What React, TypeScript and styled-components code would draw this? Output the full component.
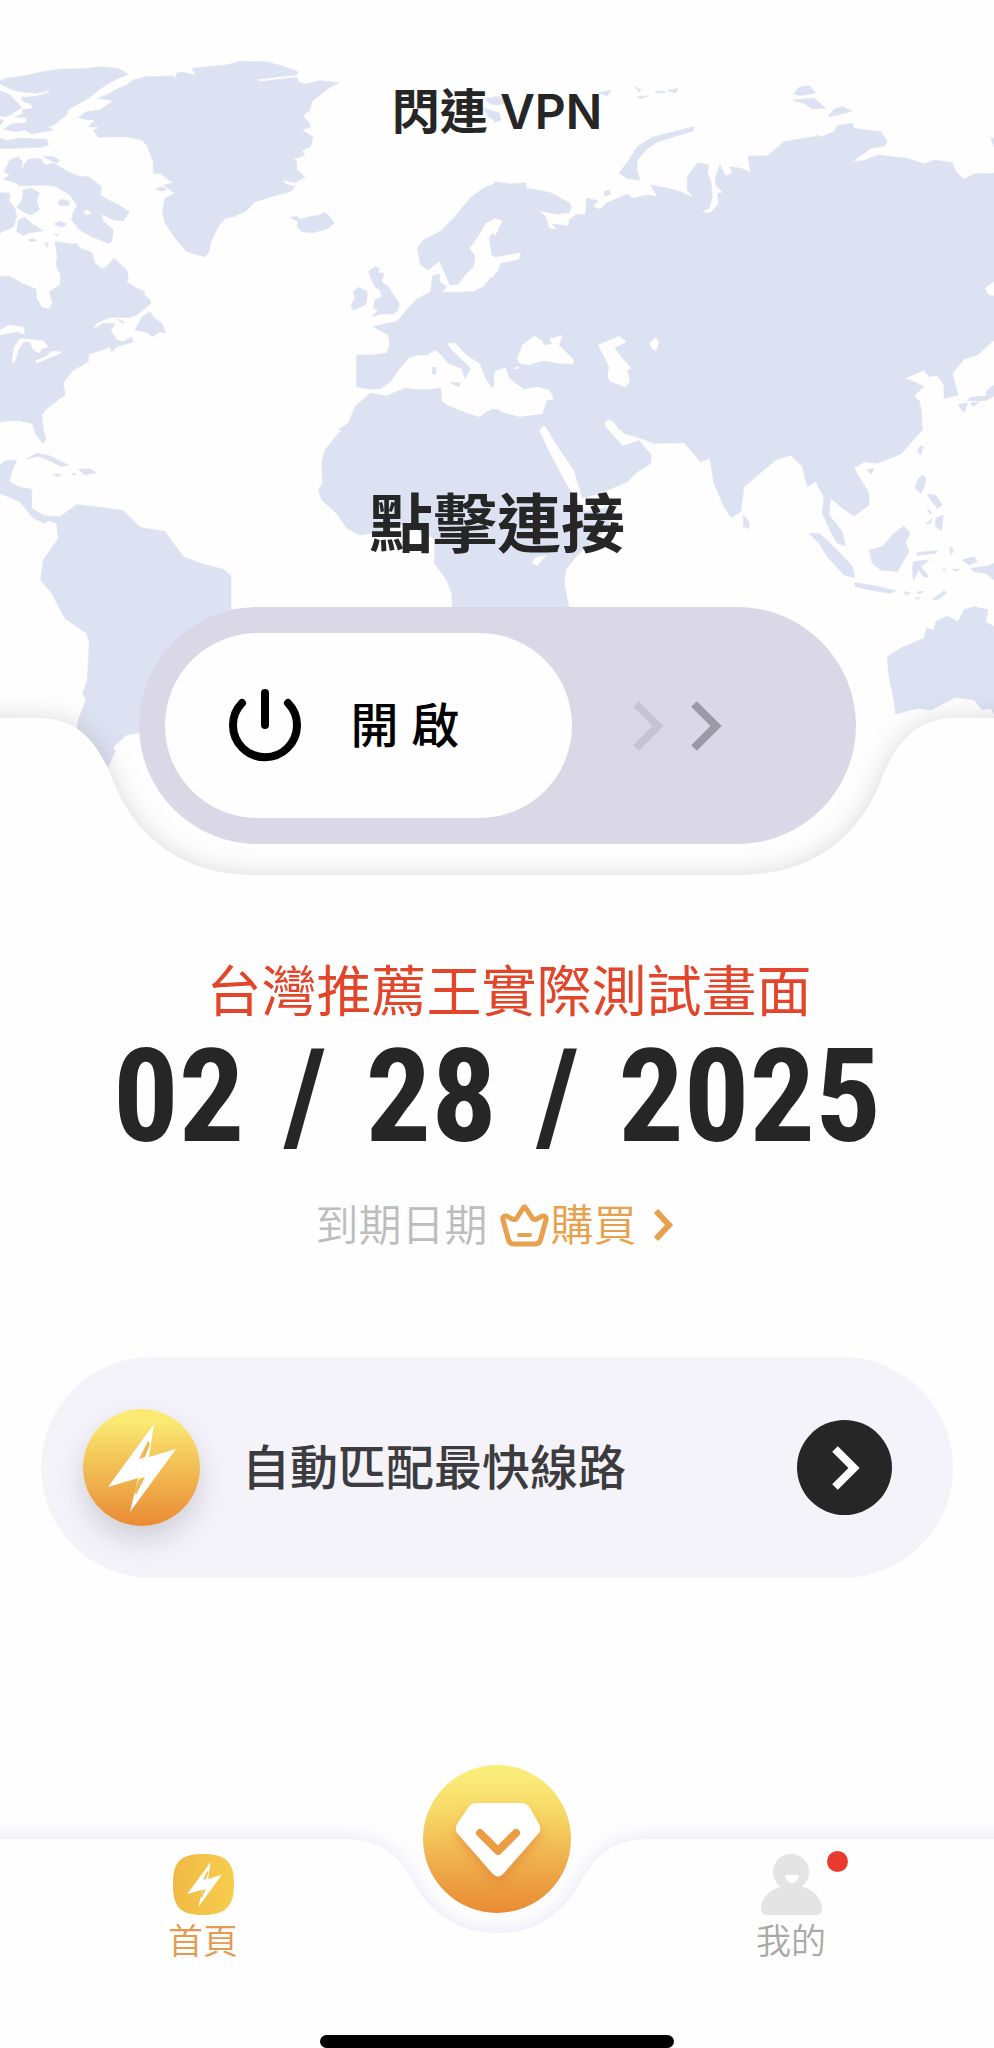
import React from "react";
import styled, { createGlobalStyle } from "styled-components";

const PAGE = "#fefefe";
const LAND = "#dde2f2";
const INK = "#262626";
const AMBER = "#e8a04c";

const GlobalStyle = createGlobalStyle`
  *, *::before, *::after { box-sizing: border-box; }
  body {
    margin: 0;
    background: ${PAGE};
    color: ${INK};
    font-family: Inter, "Noto Sans CJK TC", sans-serif;
  }
  h1, h2, p { margin: 0; }
  button { font: inherit; color: inherit; border: 0; cursor: pointer; }
  a { color: inherit; text-decoration: none; }
`;

const Page = styled.div`
  display: flex;
  flex-direction: column;
  min-height: 100vh;
  overflow: clip;
`;

/* ---------- hero ---------- */

const Hero = styled.header`
  position: relative;
  display: flex;
  flex-direction: column;
  align-items: center;
  padding: 80px 24px 31px;
`;

const MapDrawing = styled.svg`
  position: absolute;
  inset: 0;
  width: 100%;
  height: 100%;
`;

const SheetEdge = styled.svg`
  position: absolute;
  left: 0;
  bottom: 0;
  width: 100%;
  height: 157px;
  overflow: visible;
  filter: drop-shadow(0 0 13px rgba(0, 0, 0, 0.14));
`;

const HeroText = styled.div`
  position: relative;
  text-align: center;
`;

const AppTitle = styled.h1`
  font-size: 48px;
  line-height: 64px;
  font-weight: 600;
`;

const Status = styled.h2`
  margin-top: 340px;
  font-size: 64px;
  line-height: 80px;
  font-weight: 700;
`;

const Toggle = styled.button`
  position: relative;
  display: flex;
  align-items: center;
  gap: 60px;
  width: 100%;
  max-width: 717px;
  margin-top: 43px;
  padding: 26px;
  border-radius: 119px;
  background: #dad8e7;
`;

const Thumb = styled.span`
  display: flex;
  align-items: center;
  gap: 50px;
  width: 407px;
  height: 185px;
  padding-left: 64px;
  border-radius: 93px;
  background: ${PAGE};
  color: #000;
  font-size: 48px;
  line-height: 64px;
  font-weight: 500;
`;

const Arrows = styled.span`
  display: flex;
  gap: 26px;
`;

/* ---------- plan ---------- */

const Content = styled.main`
  position: relative;
  display: flex;
  flex-direction: column;
  background: ${PAGE};
`;

const Plan = styled.section`
  display: flex;
  flex-direction: column;
  align-items: center;
  padding: 80px 24px 0;
`;

const Note = styled.p`
  padding-left: 24px;
  color: #e3452a;
  font-size: 55px;
  line-height: 72px;
`;

const ExpiryDate = styled.time`
  display: flex;
  gap: 39px;
  font-family: "Roboto Condensed", Roboto, sans-serif;
  font-size: 130px;
  line-height: 140px;
  font-weight: 700;
`;

const ExpiryRow = styled.p`
  display: flex;
  align-items: center;
  gap: 12px;
  margin-top: 26px;
  color: #bdbdbd;
  font-size: 43px;
  line-height: 64px;
  font-weight: 350;
`;

const BuyLink = styled.a`
  display: flex;
  align-items: center;
  gap: 2px;
  color: ${AMBER};
`;

const BuyArrow = styled.svg`
  margin-left: 12px;
`;

/* ---------- route ---------- */

const Route = styled.button`
  display: flex;
  align-items: center;
  gap: 42px;
  margin: 100px 41px 0;
  padding: 0 61px 0 42px;
  height: 221px;
  border-radius: 111px;
  background: #f4f3fa;
  color: #3c3c3f;
  font-size: 48px;
  line-height: 64px;
  font-weight: 500;
  text-align: left;
`;

const RouteName = styled.span`
  flex: 1;
`;

const Disc = styled.span<{ $size: number; $fill: string; $shadow?: string }>`
  display: flex;
  flex: none;
  align-items: center;
  justify-content: center;
  width: ${(p) => p.$size}px;
  height: ${(p) => p.$size}px;
  border-radius: 50%;
  background: ${(p) => p.$fill};
  box-shadow: ${(p) => p.$shadow ?? "none"};
`;

/* ---------- tab bar ---------- */

const TabBar = styled.nav`
  position: relative;
  display: grid;
  grid-template-columns: repeat(3, 1fr);
  margin-top: auto;
  padding: 15px 56px 0;
`;

const TabEdge = styled.svg`
  position: absolute;
  left: 0;
  top: 0;
  width: 100%;
  height: 194px;
  overflow: visible;
  filter: drop-shadow(0 0 10px rgba(190, 190, 235, 0.4));
`;

const Tab = styled.a<{ $active?: boolean }>`
  position: relative;
  display: flex;
  flex-direction: column;
  align-items: center;
  color: ${(p) => (p.$active ? "#e59a50" : "#a9a9a9")};
  font-size: 35px;
  line-height: 48px;
  font-weight: 350;
`;

const TabIcon = styled.span`
  position: relative;
  display: flex;
  margin-bottom: 2px;
`;

const Badge = styled.span`
  position: absolute;
  top: -3px;
  left: 66px;
  width: 21px;
  height: 21px;
  border-radius: 50%;
  background: #e83b2e;
`;

const VipButton = styled.button`
  position: relative;
  justify-self: center;
  width: 148px;
  height: 148px;
  margin-top: -89px;
  padding: 0;
  border-radius: 50%;
  background: linear-gradient(#faec78 8%, #f7d866 32%, #eeae4c 66%, #ea8b34);
`;

const HomeIndicator = styled.div`
  position: relative;
  width: 354px;
  height: 13px;
  margin: 70px auto 0;
  border-radius: 7px;
  background: #000;
`;

/* ---------- world map ---------- */

type Tile = { x: number; y: number; h: number; land: string[]; sea: string[] };

const tiles: Tile[] = [
  {
    x: 0,
    y: 30,
    h: 1200,
    land: [
      "M0 152 20 145 70 138 130 125 185 117 260 116 300 110 355 116 385 132 345 150 310 170 265 205 205 238 200 255 160 285 145 292 160 300 95 312 75 300 45 305 12 298 35 282 80 278 78 262 45 262 70 250 65 240 100 235 92 222 70 215 65 202 105 200 145 188 150 180 110 190 70 186 40 180 0 162Z",
      "M0 182 30 195 65 232 40 248 20 260 0 258Z",
      "M0 268 10 270 5 282 0 283Z",
      "M0 325 20 332 60 325 140 328 146 345 120 352 0 356Z",
      "M30 390 55 380 68 395 62 425 75 400 85 388 120 385 135 405 160 400 205 425 240 440 265 440 305 470 300 495 325 510 355 525 388 545 370 572 340 570 305 552 308 572 340 600 335 635 325 640 280 622 240 600 215 570 220 545 232 528 210 495 165 468 130 465 60 467 40 455 10 448 30 435 12 425Z",
      "M130 380 160 380 180 392 170 400Z",
      "M70 480 95 475 118 490 110 510 118 540 90 555 62 540 50 530 65 515Z",
      "M0 488 30 490 28 515 45 535 50 560 40 590 0 608Z",
      "M55 570 75 562 95 580 128 602 90 608 70 616 50 605Z",
      "M172 518 185 508 208 514 205 526 182 527ZM162 582 180 574 200 582 185 592ZM85 630 100 625 110 632 92 635ZM162 613 176 611 172 618ZM134 640 144 640 142 652Z",
      "M0 738 30 740 70 762 108 778 110 805 125 832 145 838 158 820 148 785 180 765 182 735 168 705 172 680 165 635 215 642 230 640 240 655 275 668 285 700 305 716 320 710 342 685 380 720 385 745 380 755 410 775 435 785 430 792 450 810 452 820 435 835 410 855 390 862 330 862 290 880 275 900 310 880 345 882 332 900 350 930 370 935 395 922 400 935 350 950 335 967 330 950 300 962 265 972 265 995 220 1020 195 1050 190 1060 195 1095 150 1125 125 1155 130 1200 105 1200 98 1180 60 1170 0 1172Z",
      "M355 868 372 875 368 882Z",
      "M450 845 462 865 485 880 497 908 480 905 455 920 445 908 405 900 425 862Z",
      "M235 262 260 245 300 240 340 212 295 205 330 190 345 180 380 165 400 150 440 140 520 138 525 150 530 130 545 126 590 137 575 115 610 112 680 105 720 94 800 96 840 106 895 125 890 135 830 141 770 148 780 155 890 142 895 155 915 162 960 152 1018 158 990 172 960 195 935 215 930 240 908 258 925 275 932 290 905 300 940 322 930 350 905 362 915 375 880 388 890 395 890 420 915 442 885 458 850 450 855 462 885 470 870 485 830 495 790 508 765 515 735 545 700 560 675 565 655 590 635 630 625 670 612 680 560 665 530 630 495 580 487 545 495 505 525 490 490 465 520 460 480 430 460 430 460 395 440 345 425 330 380 320 330 320 295 322 280 300 303 292 265 290 285 270 255 268Z",
      "M468 476 485 470 500 478 485 484Z",
      "M870 562 890 560 900 568 930 560 960 555 970 547 985 555 1003 578 985 595 940 608 905 605 890 588 895 575Z",
      "M1075 772 1102 785 1100 815 1095 825 1060 840 1053 825 1065 805 1060 785Z",
      "M1105 725 1125 710 1138 715 1135 728 1153 730 1145 755 1165 770 1180 795 1198 820 1195 840 1180 852 1145 852 1115 860 1135 840 1120 835 1125 810 1145 800 1140 780 1125 770 1115 750Z",
      "M1500 455 1450 475 1410 505 1365 560 1320 605 1270 630 1252 655 1262 705 1285 720 1318 692 1335 730 1350 765 1375 762 1395 735 1420 710 1425 680 1408 655 1440 610 1455 580 1480 568 1500 568Z",
      "M1500 595 1468 620 1475 675 1500 682Z",
      "M1500 735 1470 745 1450 770 1420 785 1325 788 1340 770 1320 758 1318 732 1298 738 1292 785 1250 808 1220 840 1190 875 1160 880 1120 890 1165 915 1170 945 1160 970 1110 975 1070 975 1070 1070 1110 1078 1145 1075 1175 1050 1195 1020 1225 985 1250 975 1280 975 1305 960 1325 975 1345 1000 1385 1015 1395 1045 1412 1015 1380 985 1350 955 1340 938 1365 938 1400 975 1440 1000 1455 1040 1475 1072 1500 1060Z",
      "M1297 1012 1308 1012 1307 1032 1297 1032ZM1350 1058 1382 1058 1376 1070Z",
      "M1015 1200 1045 1180 1065 1130 1110 1090 1160 1098 1215 1075 1270 1080 1322 1075 1325 1120 1350 1130 1400 1150 1440 1165 1460 1145 1500 1140V1200Z",
      "M1455 205 1500 200V225L1470 222ZM1450 235 1500 250V275L1470 265Z",
    ],
    sea: [
      "M0 900 25 885 70 890 75 915 50 905 20 912 0 915Z",
      "M60 925 95 928 130 932 145 950 125 958 118 970 100 960 88 935 72 935 58 955 45 995 35 998 42 950Z",
      "M105 992 140 978 155 963 187 965 175 974 145 985 110 1000Z",
      "M248 545 262 540 276 548 262 556Z",
      "M1500 1018 1490 1022 1500 1040Z",
    ],
  },
  {
    x: 494,
    y: 30,
    h: 1200,
    land: [
      "M0 455 50 462 95 458 95 475 120 478 170 488 225 518 232 530 225 548 190 552 135 542 155 560 165 595 190 600 175 582 225 588 225 570 245 555 275 553 278 505 312 512 295 530 318 538 340 518 365 508 400 492 415 505 460 495 490 500 470 465 520 475 560 485 600 505 580 480 580 440 610 398 645 405 640 430 650 450 655 500 645 535 620 548 650 548 675 520 670 490 688 488 665 465 665 440 678 405 695 438 715 430 708 410 740 415 770 428 762 378 820 378 870 335 960 320 970 315 980 322 1020 305 1030 287 1075 280 1080 295 1100 298 1160 305 1180 335 1170 348 1130 355 1075 395 1110 392 1150 375 1240 385 1290 402 1320 390 1375 398 1385 425 1410 448 1440 432 1500 430V930L1450 975 1410 988 1375 1030 1392 1095 1350 1105 1350 1065 1330 1035 1305 1040 1290 1020 1232 1045 1270 1060 1290 1070 1262 1095 1280 1130 1285 1200H0Z",
      "M0 200 25 205 35 220 0 222ZM0 245 22 268 0 278Z",
      "M315 188 352 180 340 197ZM422 170 442 180 435 186ZM430 200 465 197 440 206ZM484 184 512 183 512 188 486 188ZM520 182 552 175 545 188Z",
      "M375 430 405 390 430 350 475 322 540 305 600 290 598 302 540 320 490 335 455 360 430 390 428 420 438 450 400 445Z",
      "M900 192 915 172 945 167 965 188 920 197ZM898 210 960 205 995 235 955 237 930 220ZM1002 260 1020 238 1045 230 1075 243 1030 255Z",
      "M330 485 345 480 350 492 334 498ZM1490 322 1500 326V352Z",
      "M1500 1065 1480 1080 1475 1098 1430 1102 1420 1112 1475 1112 1500 1098ZM1393 1125 1420 1120 1410 1147ZM1432 1120 1455 1116 1436 1128Z",
    ],
    sea: [
      "M0 1030 5 1022 35 1012 45 1045 90 1078 130 1070 165 1080 178 1102 155 1150 80 1162 0 1140Z",
      "M70 985 85 945 120 918 145 932 150 945 175 942 165 928 205 915 195 945 240 990 238 1003 190 1000 150 992 100 1005 75 1000Z",
      "M60 1014 70 1010 78 1014 68 1018Z",
      "M312 945 375 918 398 935 362 955 385 985 412 1015 400 1020 408 1055 395 1072 350 1055 340 1040 345 1010 325 970Z",
      "M466 940 485 922 495 938 487 962 475 958Z",
      "M0 565 25 572 5 615 0 615Z",
      "M0 682 80 668 75 688 20 700 10 725 0 735Z",
      "M1500 755 1472 775 1485 795 1500 797Z",
      "M150 1187 165 1200H135ZM330 1175 345 1166 358 1175 375 1200H335Z",
    ],
  },
  {
    x: 0,
    y: 400,
    h: 1425,
    land: [
      "M0 0H175L140 25 120 50 125 80 138 115 130 130 108 105 98 70 50 60 0 65Z",
      "M0 195 20 180 50 182 35 215 28 245 60 262 95 268 95 325 135 348 180 350 230 314 300 322 370 332 420 382 495 395 550 470 600 490 670 508 693 528V650L480 1000 415 998 380 1005 340 1040 345 1055 325 1100 230 990 235 960 258 900 248 880 262 840 268 730 260 700 195 655 155 580 122 540 130 480 175 415 170 370 145 362 135 370 100 355 60 305 0 280Z",
      "M80 178 110 160 150 168 205 195 185 200 150 182 115 168ZM235 207 270 207 288 218 255 225ZM160 222 185 223 172 230ZM216 220 228 222 222 226Z",
      "M1500 30 1475 28 1440 52 1380 38 1325 5V0H1090L1065 25 1045 75 1015 100 975 150 965 190 968 250 955 270 965 300 1010 340 1040 385 1080 405 1150 395 1230 365 1265 400 1305 415 1304 490 1340 540 1355 580 1360 640H1500Z",
    ],
    sea: [],
  },
  {
    x: 494,
    y: 400,
    h: 1425,
    land: [
      "M0 30 70 52 140 45 135 90 165 155 215 250 240 290 275 335 370 315 340 385 250 465 215 510 210 550 228 640H0Z",
      "M160 0 145 45 155 78 185 130 240 210 265 295 330 275 400 245 430 215 470 190 472 165 435 122 385 138 330 75 335 60 355 60 390 100 440 115 480 130 570 128 620 185 648 175 660 250 690 320 712 352 740 335 750 260 845 180 890 165 925 200 940 260 965 245 990 290 985 340 1010 395 1030 430 1055 438 1045 395 1005 345 1010 295 1040 320 1080 348 1125 315 1125 280 1080 205 1110 185 1150 190 1220 162 1285 90 1280 30 1275 0Z",
      "M1118 210 1140 205 1132 222ZM1270 150 1282 137 1288 142 1280 165ZM748 345 765 365 765 385 748 380Z",
      "M945 400 975 400 1030 450 1075 500 1082 533 1050 525 1000 470 975 430Z",
      "M1080 548 1130 555 1205 572 1190 580 1130 570 1085 560Z",
      "M1125 450 1165 440 1200 400 1230 378 1248 400 1235 425 1245 455 1210 515 1160 510 1135 490Z",
      "M1258 485 1305 480 1280 500 1305 530 1290 532 1275 510 1258 540 1255 510ZM1268 458 1330 452 1325 460 1270 466ZM1368 440 1380 450 1370 466Z",
      "M1275 235 1285 225 1296 235 1290 265 1280 280 1262 262ZM1300 282 1325 285 1345 315 1330 325 1310 300ZM1325 355 1348 345 1342 392 1325 378ZM1295 372 1315 356 1310 370ZM1298 325 1315 338 1308 342Z",
      "M1405 480 1440 470 1450 485 1425 495ZM1430 505 1480 498 1500 490V540L1475 520 1440 515ZM1375 508 1398 507 1385 514ZM1345 508 1356 508 1350 513Z",
      "M1230 575 1250 578 1235 586ZM1268 576 1290 574 1275 582ZM1315 598 1350 572 1358 578 1330 600ZM1262 592 1278 594 1270 598Z",
      "M1393 15 1420 10 1410 37ZM1430 10 1455 6 1436 18Z",
      "M1180 770 1225 742 1290 715 1298 685 1320 690 1325 665 1360 648 1392 665 1410 630 1440 620 1482 630 1475 665 1500 680V942L1490 925 1465 930 1440 900 1385 892 1310 930 1270 925 1205 942 1200 900 1185 830Z",
    ],
    sea: ["M113 490 125 472 158 465 130 497Z"],
  },
];

function WorldMap() {
  return (
    <MapDrawing viewBox="0 0 994 875" preserveAspectRatio="xMidYMin slice" aria-hidden="true">
      {tiles.map((t) => (
        <svg
          key={`${t.x}-${t.y}`}
          x={t.x}
          y={t.y}
          width={500}
          height={t.h / 3}
          viewBox={`0 0 1500 ${t.h}`}
        >
          <path d={t.land.join("")} fill={LAND} stroke={LAND} strokeWidth="2" strokeLinejoin="round" />
          <path d={t.sea.join("")} fill={PAGE} />
        </svg>
      ))}
    </MapDrawing>
  );
}

/* ---------- icons ---------- */

function PowerIcon() {
  return (
    <svg width="72" height="74" viewBox="0 0 72 74" fill="none" stroke="#000" strokeWidth="8" strokeLinecap="round" aria-hidden="true">
      <path d="M36 4V36M13 14A32 32 0 1 0 59 14" />
    </svg>
  );
}

function SlideArrow({ color }: { color: string }) {
  return (
    <svg width="32" height="52" viewBox="0 0 32 52" fill="none" stroke={color} strokeWidth="8" aria-hidden="true">
      <path d="M4 4 26 26 4 48" />
    </svg>
  );
}

function CrownIcon() {
  return (
    <svg width="49" height="43" viewBox="0 0 49 43" fill="none" stroke={AMBER} strokeWidth="5" strokeLinecap="round" strokeLinejoin="round" aria-hidden="true">
      <path d="M24 3C21 7 19 11 16 15C12 17 9 12 6 12Q2 12 3 16L8 34Q9 40 14 40H35Q40 40 41 34L46 16Q47 12 43 12C40 12 37 17 33 15C30 11 28 7 25 3Z" />
      <path d="M19 31H30" strokeWidth="4" />
    </svg>
  );
}

function BoltShape({ hollow }: { hollow: string }) {
  return (
    <>
      <path d="M56 0 10 63 40 54 32 88 78 25 51 33Z" fill="#fff" />
      <path d="M50 17 52 20 47 33 41 35ZM38 71 36 68 41 55 47 53Z" fill={hollow} />
    </>
  );
}

function BoltIcon() {
  return (
    <svg width="88" height="88" viewBox="0 0 88 88" aria-hidden="true">
      <BoltShape hollow="#f0b852" />
    </svg>
  );
}

function HomeIcon() {
  return (
    <svg width="61" height="61" viewBox="0 0 61 61" aria-hidden="true">
      <defs>
        <linearGradient id="home-fill">
          <stop offset="0" stopColor="#f1b944" />
          <stop offset="1" stopColor="#f6cd4e" />
        </linearGradient>
      </defs>
      <path d="M30 0C53 0 61 8 61 30S53 61 30 61 0 53 0 30 8 0 30 0Z" fill="url(#home-fill)" />
      <svg x="9" y="8" width="45" height="45" viewBox="0 0 88 88">
        <BoltShape hollow="#f3c149" />
      </svg>
    </svg>
  );
}

function ProfileIcon() {
  return (
    <svg width="61" height="61" viewBox="0 0 61 61" fill="#e4e4e4" aria-hidden="true">
      <circle cx="30" cy="18" r="18" />
      <path d="M16 34C22 30 38 30 45 34C55 38 61 46 61 55Q61 61 55 61H6Q0 61 0 55C0 46 6 38 16 34Z" />
      <path d="M25 21H37Q38 21 38 23Q35 29 31 29Q27 29 24 23Q24 21 25 21Z" fill={PAGE} />
    </svg>
  );
}

function GemIcon() {
  return (
    <svg width="148" height="148" viewBox="0 0 148 148" aria-hidden="true">
      <defs>
        <filter id="gem-shadow" x="-20%" y="-20%" width="140%" height="150%">
          <feDropShadow dx="0" dy="6" stdDeviation="5" floodColor="#e0782a" floodOpacity="0.5" />
        </filter>
      </defs>
      <path
        d="M54 38H98Q104 38 107 43L116 59Q119 65 115 69L81 108Q75 115 69 108L35 69Q31 65 34 59L45 43Q48 38 54 38Z"
        fill="#fff"
        filter="url(#gem-shadow)"
      />
      <path d="M57 68 75 86 93 68" fill="none" stroke="#ec9c41" strokeWidth="8" strokeLinecap="round" strokeLinejoin="round" />
    </svg>
  );
}

export default function App() {
  return (
    <Page>
      <GlobalStyle />
      <Hero>
        <WorldMap />
        <SheetEdge viewBox="0 0 994 157" preserveAspectRatio="xMidYMin meet" aria-hidden="true">
          <path
            d="M-3000 0H38C83 0 100 30 114 65C136 121 186 157 252 157H742C808 157 858 121 880 65C894 30 911 0 956 0H3994V260H-3000Z"
            fill={PAGE}
          />
        </SheetEdge>
        <HeroText>
          <AppTitle>閃連 VPN</AppTitle>
          <Status>點擊連接</Status>
        </HeroText>
        <Toggle type="button">
          <Thumb>
            <PowerIcon />
            開 啟
          </Thumb>
          <Arrows>
            <SlideArrow color="#c6c4d2" />
            <SlideArrow color="#9b99a6" />
          </Arrows>
        </Toggle>
      </Hero>

      <Content>
        <Plan>
          <Note>台灣推薦王實際測試畫面</Note>
          <ExpiryDate dateTime="2025-02-28">
            <span>02</span>
            <span>/</span>
            <span>28</span>
            <span>/</span>
            <span>2025</span>
          </ExpiryDate>
          <ExpiryRow>
            到期日期
            <BuyLink href="#buy">
              <CrownIcon />
              購買
              <BuyArrow width="28" height="36" viewBox="0 0 28 36" fill="none" stroke={AMBER} strokeWidth="6" aria-hidden="true">
                <path d="M5 4 18 18 5 32" />
              </BuyArrow>
            </BuyLink>
          </ExpiryRow>
        </Plan>
        <Route type="button">
          <Disc
            $size={117}
            $fill="linear-gradient(#faea74 10%, #f3c358 45%, #ea8a34)"
            $shadow="0 14px 28px rgba(70, 70, 90, 0.2)"
          >
            <BoltIcon />
          </Disc>
          <RouteName>自動匹配最快線路</RouteName>
          <Disc $size={95} $fill={INK}>
            <svg width="32" height="46" viewBox="0 0 32 46" fill="none" stroke="#fff" strokeWidth="8" aria-hidden="true">
              <path d="M6 4 25 23 6 42" />
            </svg>
          </Disc>
        </Route>
      </Content>

      <TabBar>
        <TabEdge viewBox="0 0 994 194" preserveAspectRatio="xMidYMin meet" aria-hidden="true">
          <path
            d="M-3000 0H345C385 0 401 21 414 44C433 78 462 94 497 94S561 78 580 44C593 21 609 0 649 0H3994V300H-3000Z"
            fill={PAGE}
          />
        </TabEdge>
        <Tab href="#home" $active>
          <TabIcon>
            <HomeIcon />
          </TabIcon>
          首頁
        </Tab>
        <VipButton type="button" aria-label="VIP">
          <GemIcon />
        </VipButton>
        <Tab href="#mine">
          <TabIcon>
            <ProfileIcon />
            <Badge />
          </TabIcon>
          我的
        </Tab>
      </TabBar>
      <HomeIndicator />
    </Page>
  );
}
